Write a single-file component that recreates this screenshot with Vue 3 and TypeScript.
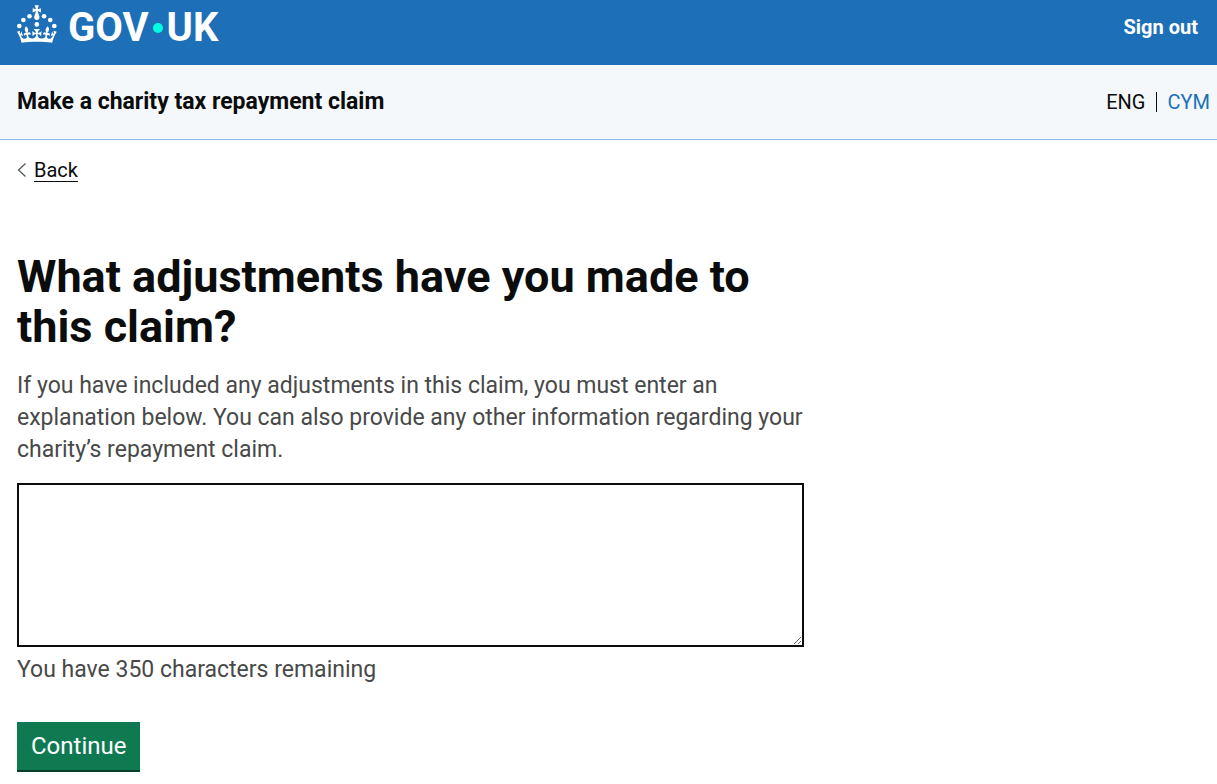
<script setup lang="ts">
import { computed, ref } from 'vue'

const limit = 350
const details = ref('')
const remaining = computed(() => limit - details.value.length)
</script>

<template>
  <div class="page">
    <header class="banner">
      <a class="logo" href="#" aria-label="GOV.UK">
        <svg class="crown" viewBox="0 0 64 60" aria-hidden="true">
          <circle cx="20" cy="17.6" r="3.7" />
          <circle cx="10.2" cy="23.5" r="3.7" />
          <circle cx="3.7" cy="33.2" r="3.7" />
          <circle cx="31.7" cy="30.6" r="3.7" />
          <circle cx="43.3" cy="17.6" r="3.7" />
          <circle cx="53.2" cy="23.5" r="3.7" />
          <circle cx="59.7" cy="33.2" r="3.7" />
          <path
            d="M33.1,9.8c.2-.1.3-.3.5-.5l4.6,2.4v-6.8l-4.6,1.5c-.1-.2-.3-.3-.5-.5l1.9-5.9h-6.7l1.9,5.9c-.2.1-.3.3-.5.5l-4.6-1.5v6.8l4.6-2.4c.1.2.3.3.5.5l-2.6,8c-.9,2.8,1.2,5.7,4.1,5.7h0c3,0,5.1-2.9,4.1-5.7l-2.6-8ZM37,37.9s-3.4,3.8-4.1,6.1c2.2,0,4.2-.5,6.4-2.8l-.7,8.5c-2-2.8-4.4-4.1-5.7-3.8.1,3.1.5,6.7,5.8,7.2,3.7.3,6.7-1.5,7-3.8.4-2.6-2-4.3-3.7-1.6-1.4-4.5,2.4-6.1,4.9-3.2-1.9-4.5-1.8-7.7,2.4-10.9,3,4,2.6,7.3-1.2,11.1,2.4-1.3,6.2,0,4,4.6-1.2-2.8-3.7-2.2-4.2.2-.3,1.7.7,3.7,3,4.2,1.9.3,4.7-.9,7-5.9-1.3,0-2.4.7-3.9,1.7l2.4-8c.6,2.3,1.4,3.7,2.2,4.5.6-1.6.5-2.8,0-5.3l5,1.8c-2.6,3.6-5.2,8.7-7.3,17.5-7.4-1.1-15.7-1.7-24.5-1.7h0c-8.8,0-17.1.6-24.5,1.7-2.1-8.9-4.7-13.9-7.3-17.5l5-1.8c-.5,2.5-.6,3.7,0,5.3.8-.8,1.6-2.3,2.2-4.5l2.4,8c-1.5-1-2.6-1.7-3.9-1.7,2.3,5,5.2,6.2,7,5.9,2.3-.4,3.3-2.4,3-4.2-.5-2.4-3-3.1-4.2-.2-2.2-4.6,1.6-6,4-4.6-3.7-3.7-4.2-7.1-1.2-11.1,4.2,3.2,4.3,6.4,2.4,10.9,2.5-2.8,6.3-1.3,4.9,3.2-1.8-2.7-4.1-1-3.7,1.6.3,2.3,3.3,4.1,7,3.8,5.4-.5,5.7-4.2,5.8-7.2-1.3-.2-3.7,1-5.7,3.8l-.7-8.5c2.2,2.3,4.2,2.7,6.4,2.8-.7-2.3-4.1-6.1-4.1-6.1h10.6,0Z"
          />
        </svg>
        <span class="wordmark"><span>GOV</span><i class="dot"></i><span>UK</span></span>
      </a>
      <a class="sign-out" href="#">Sign out</a>
    </header>

    <div class="service">
      <a class="service-name" href="#">Make a charity tax repayment claim</a>
      <nav class="languages" aria-label="Language">
        <span>ENG</span>
        <a href="#" lang="cy">CYM</a>
      </nav>
    </div>

    <main class="content">
      <a class="back" href="#">
        <svg class="chevron" viewBox="0 0 9 14" aria-hidden="true">
          <path d="M8.5 0.5 L1.5 7 L8.5 13.5" />
        </svg>
        <span>Back</span>
      </a>

      <form class="question" @submit.prevent>
        <h1><label for="details">What adjustments have you made to this claim?</label></h1>
        <p id="details-hint" class="hint">
          If you have included any adjustments in this claim, you must enter an explanation below.
          You can also provide any other information regarding your charity’s repayment claim.
        </p>
        <textarea id="details" v-model="details" aria-describedby="details-hint details-count"></textarea>
        <p id="details-count" class="count">You have {{ remaining }} characters remaining</p>
        <button type="submit">Continue</button>
      </form>
    </main>
  </div>
</template>

<style>
body {
  margin: 0;
  background: #ffffff;
}
</style>

<style scoped>
.page {
  font-family: Roboto, 'Liberation Sans', sans-serif;
  font-size: 23px;
  line-height: 32px;
  color: #0b0c0c;
}

a {
  color: inherit;
  text-decoration: none;
}

.banner {
  display: flex;
  justify-content: space-between;
  align-items: flex-start;
  padding: 5px 19px 20px 17px;
  background: #1d70b8;
  color: #ffffff;
}

.logo {
  display: flex;
  align-items: flex-start;
  gap: 11px;
  height: 40px;
}

.crown {
  width: 40px;
  height: 38px;
  fill: currentColor;
}

.wordmark {
  display: flex;
  align-items: center;
  gap: 4px;
  font-size: 40px;
  font-weight: 700;
  line-height: 46px;
}

.dot {
  width: 10px;
  height: 10px;
  border-radius: 50%;
  background: #00ffe0;
}

.sign-out {
  padding-top: 6px;
  font-size: 20px;
  font-weight: 700;
}

.service {
  display: flex;
  justify-content: space-between;
  align-items: center;
  padding: 21px 7px 21px 17px;
  border-bottom: 1px solid #8eb8dc;
  background: #f4f8fb;
}

.service-name {
  font-weight: 700;
}

.languages {
  display: flex;
  align-items: center;
  font-size: 20px;
  line-height: 20px;
}

.languages a {
  margin-left: 10px;
  padding-left: 11px;
  border-left: 1px solid #0b0c0c;
  color: #1d70b8;
}

.content {
  padding: 18px 17px 12px;
}

.back {
  display: flex;
  align-items: center;
  gap: 8px;
  width: fit-content;
  font-size: 20px;
  line-height: 24px;
}

.back span {
  text-decoration: underline;
  text-decoration-thickness: 1px;
  text-underline-offset: 4px;
}

.chevron {
  width: 9px;
  height: 14px;
  fill: none;
  stroke: #505a5f;
  stroke-width: 1.3;
}

.question {
  display: flex;
  flex-direction: column;
  align-items: flex-start;
  max-width: 787px;
  margin-top: 70px;
}

h1 {
  margin: 0 0 18px;
  font-size: 45px;
  font-weight: 700;
  line-height: 50px;
}

.hint,
.count {
  margin: 0;
  color: #484949;
}

textarea {
  box-sizing: border-box;
  width: 100%;
  height: 164px;
  margin: 17px 0 7px;
  padding: 6px;
  border: 2px solid #0b0c0c;
  border-radius: 0;
  background: #ffffff;
  color: inherit;
  font: inherit;
  resize: vertical;
}

button {
  margin-top: 36px;
  padding: 8px 14px;
  border: 0;
  border-radius: 0;
  background: #0f7a52;
  box-shadow: 0 2px 0 #083d29;
  color: #ffffff;
  font: inherit;
  font-size: 24px;
}
</style>
